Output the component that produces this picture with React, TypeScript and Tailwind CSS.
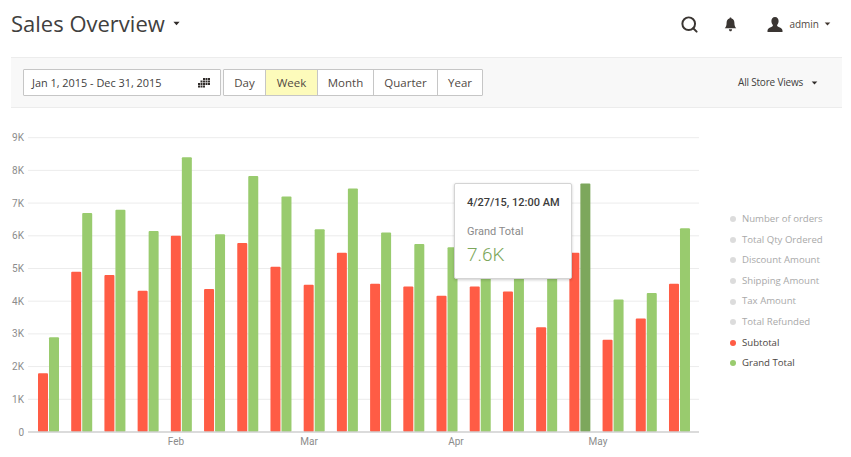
import { Search } from "lucide-react";

const ZERO = 432;
const PER_K = 32.7;
const BAR_W = 10;

// [subtotal, grand total] in thousands
const weeks: [number, number][] = [
  [1.8, 2.9], [4.9, 6.7], [4.8, 6.8], [4.32, 6.15], [6.0, 8.4],
  [4.37, 6.05], [5.78, 7.83], [5.05, 7.2], [4.5, 6.2], [5.48, 7.45],
  [4.53, 6.1], [4.45, 5.75], [4.17, 5.65], [4.45, 5.7], [4.3, 5.8],
  [3.2, 5.9], [5.48, 7.6], [2.82, 4.05], [3.47, 4.25], [4.53, 6.23],
];

const months = [
  { label: "Feb", x: 176 },
  { label: "Mar", x: 309 },
  { label: "Apr", x: 456 },
  { label: "May", x: 598 },
];

const ranges = [
  { label: "Day", w: "w-[41px]" },
  { label: "Week", w: "w-[52px]" },
  { label: "Month", w: "w-[56px]" },
  { label: "Quarter", w: "w-[64px]" },
  { label: "Year", w: "w-[45px]" },
];

const legend = [
  { label: "Number of orders", dot: "bg-[#dcdcdc]", text: "text-[#a9a9a9]" },
  { label: "Total Qty Ordered", dot: "bg-[#dcdcdc]", text: "text-[#a9a9a9]" },
  { label: "Discount Amount", dot: "bg-[#dcdcdc]", text: "text-[#a9a9a9]" },
  { label: "Shipping Amount", dot: "bg-[#dcdcdc]", text: "text-[#a9a9a9]" },
  { label: "Tax Amount", dot: "bg-[#dcdcdc]", text: "text-[#a9a9a9]" },
  { label: "Total Refunded", dot: "bg-[#dcdcdc]", text: "text-[#a9a9a9]" },
  { label: "Subtotal", dot: "bg-[#ff5c45]", text: "text-[#4a4542]" },
  { label: "Grand Total", dot: "bg-[#99cb6e]", text: "text-[#4a4542]" },
];

function Caret({ className }: { className: string }) {
  return (
    <svg viewBox="0 0 8 5" className={className} fill="currentColor">
      <path d="M0.5 0.5h7L4 4.5z" />
    </svg>
  );
}

function CalendarDots() {
  const cells = [
    [6, 0], [8.5, 0], [11, 0],
    [3.5, 2.5], [6, 2.5], [8.5, 2.5], [11, 2.5],
    [1, 5], [3.5, 5], [6, 5], [8.5, 5], [11, 5],
    [1, 7.5], [3.5, 7.5], [6, 7.5],
  ];
  return (
    <svg viewBox="0 0 13 10" className="w-[13px] h-[10px] text-[#2f2b29]" fill="currentColor">
      {cells.map(([x, y]) => (
        <rect key={`${x}-${y}`} x={x} y={y} width="2" height="2" />
      ))}
    </svg>
  );
}

function Chart() {
  return (
    <svg viewBox="0 108 700 349" className="w-[700px] h-[349px] block">
      {[1, 2, 3, 4, 5, 6, 7, 8, 9].map((k) => (
        <line key={k} x1="28" x2="699" y1={ZERO - k * PER_K} y2={ZERO - k * PER_K} stroke="#ececec" strokeWidth="1" />
      ))}
      {[0, 1, 2, 3, 4, 5, 6, 7, 8, 9].map((k) => (
        <text
          key={k}
          x="24"
          y={ZERO - k * PER_K + 3.5}
          textAnchor="end"
          fontSize="10"
          fill="#8c8c8c"
          fontFamily="Roboto, sans-serif"
        >
          {k === 0 ? "0" : `${k}K`}
        </text>
      ))}
      {weeks.map(([red, green], i) => {
        const x = 38 + i * 33.21;
        const dark = i === 16;
        return (
          <g key={i}>
            <rect x={x} y={ZERO - red * PER_K} width={BAR_W} height={red * PER_K} rx="1" fill="#ff5c45" />
            <rect
              x={x + 11}
              y={ZERO - green * PER_K}
              width={BAR_W}
              height={green * PER_K}
              rx="1"
              fill={dark ? "#7da75c" : "#99cb6e"}
            />
          </g>
        );
      })}
      <line x1="28" x2="699" y1={ZERO} y2={ZERO} stroke="#cfcfcf" strokeWidth="1.5" />
      {months.map((m) => (
        <text
          key={m.label}
          x={m.x}
          y="445"
          textAnchor="middle"
          fontSize="10"
          fill="#8c8c8c"
          fontFamily="Roboto, sans-serif"
        >
          {m.label}
        </text>
      ))}
    </svg>
  );
}

export default function App() {
  return (
    <div className="w-[851px] h-[457px] overflow-hidden bg-white text-[#41362f] font-['Open_Sans',sans-serif]">
      <header className="h-[57px] pl-[11px] pr-[20px] flex items-start">
        <h1 className="text-[22px] leading-[46px] text-[#41403e]">Sales Overview</h1>
        <Caret className="w-[7px] h-[5px] ml-[8px] mt-[21px] text-[#2f2b29]" />
        <div className="ml-auto flex items-center h-[48px] text-[#41362f]">
          <Search className="w-[19px] h-[19px] text-[#3a3532]" strokeWidth={2.5} />
          <svg viewBox="0 0 14 16" className="w-[13px] h-[15px] ml-[25px]" fill="#3a3532">
            <path d="M7 0.5c.7 0 1.1.5 1.1 1.1 2 .5 3.1 2.2 3.1 4.4 0 3 .6 4.4 2 6H.8c1.4-1.6 2-3 2-6 0-2.200 1.100-3.900 3.100-4.400C5.900 1 6.300.5 7 .5z" />
            <path d="M5.300 13h3.400c0 1.300-.7 2.300-1.700 2.300S5.300 14.300 5.300 13z" />
          </svg>
          <svg viewBox="0 0 16 15" className="w-[16px] h-[15px] ml-[30px]" fill="#3a3532">
            <path d="M8 0c2.300 0 3.600 1.700 3.600 4 0 1.700-.7 3.200-1.500 4 0 1 .4 1.500 1.500 2 1.800.7 3.800 1.400 3.900 3.500V15H.500v-1.500C.600 11.400 2.600 10.700 4.400 10c1.100-.5 1.500-1 1.500-2-.8-.8-1.500-2.300-1.500-4C4.400 1.700 5.700 0 8 0z" />
          </svg>
          <span className="ml-[6px] text-[10px] text-[#514943]">admin</span>
          <Caret className="w-[7px] h-[4px] ml-[5px] text-[#41362f]" />
        </div>
      </header>

      <div className="ml-[11px] w-[831px] h-[51px] bg-[#f8f8f8] border-y border-[#ececec] pl-[12px] pr-[24px] flex items-center">
        <div className="w-[198px] h-[27px] bg-white border border-[#c6c6c6] rounded-[1px] pl-[8px] pr-[10px] flex items-center justify-between">
          <span className="mt-[1px] text-[10.9px] text-[#41403e]">Jan 1, 2015 - Dec 31, 2015</span>
          <CalendarDots />
        </div>
        <div className="ml-[2px] h-[27px] flex bg-white border border-[#c6c6c6] rounded-[1px]">
          {ranges.map((r, i) => (
            <button
              key={r.label}
              className={`${r.w} text-[11.5px] text-[#514943] flex items-center justify-center ${
                i > 0 ? "border-l border-[#c6c6c6]" : ""
              } ${r.label === "Week" ? "bg-[#fdfbbb]" : ""}`}
            >
              {r.label}
            </button>
          ))}
        </div>
        <div className="ml-auto flex items-center text-[#41403e]">
          <span className="text-[10px] tracking-[-0.2px]">All Store Views</span>
          <Caret className="w-[7px] h-[4px] ml-[8px] text-[#2f2b29]" />
        </div>
      </div>

      <div className="flex">
        <div className="relative w-[700px]">
          <Chart />
          <div className="absolute left-[454px] top-[75px] w-[118px] h-[96px] bg-white border border-[#d4d4d4] rounded-[2px] shadow-[0_1px_3px_rgba(0,0,0,0.2)] pl-[12px] pt-[12px] font-['Roboto',sans-serif]">
            <div className="text-[11px] font-medium text-[#3c3c3c] leading-[14px] whitespace-nowrap">4/27/15, 12:00 AM</div>
            <div className="text-[11px] text-[#8a8a8a] leading-[14px] mt-[15px]">Grand Total</div>
            <div className="text-[19px] font-light text-[#7da75c] leading-[22px] mt-[5px]">7.6K</div>
          </div>
        </div>
        <ul className="ml-[30px] mt-[101px] flex flex-col">
          {legend.map((l) => (
            <li key={l.label} className="h-[20.6px] flex items-center">
              <span className={`w-[6px] h-[6px] rounded-full ${l.dot}`} />
              <span className={`ml-[6px] text-[9.6px] whitespace-nowrap ${l.text}`}>{l.label}</span>
            </li>
          ))}
        </ul>
      </div>
    </div>
  );
}
